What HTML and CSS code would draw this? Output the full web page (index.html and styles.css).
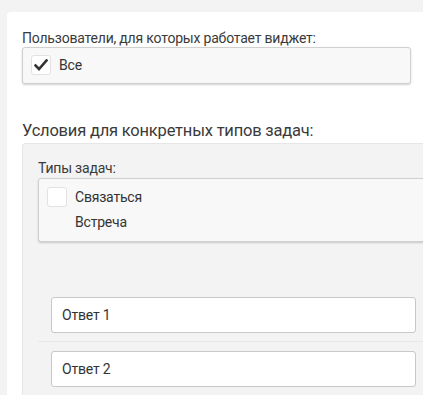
FILE: index.html
```html
<!DOCTYPE html>
<html>
<head>
    <meta charset="utf-8" />
    <title></title>
    <link rel="stylesheet" href="styles.css">
</head>
<body>
    <div class="card">
        <div class="field">
            <div class="label">Пользователи, для которых работает виджет:</div>
            <div class="select">
                <div class="option">
                    <span class="check checked">
                        <svg width="14" height="12" viewBox="0 0 14 12"><path d="M1.5 6.5 L5 10 L12.5 1.5" fill="none" stroke="#333" stroke-width="2.6" stroke-linecap="square"/></svg>
                    </span>
                    <span>Все</span>
                </div>
            </div>
        </div>
        <div class="title">Условия для конкретных типов задач:</div>
        <div class="panel">
            <div class="label">Типы задач:</div>
            <div class="select">
                <div class="option">
                    <span class="check"></span>
                    <span>Связаться</span>
                </div>
                <div class="option">
                    <span class="check none"></span>
                    <span>Встреча</span>
                </div>
            </div>
            <div class="answers">
                <div class="answer"><div class="input">Ответ 1</div></div>
                <div class="answer"><div class="input">Ответ 2</div></div>
            </div>
        </div>
    </div>
</body>
</html>
```

FILE: styles.css
```css
*{
    padding:0;
    margin:0;
    box-sizing:border-box;
}
body{
    background:#f3f3f3;
    font-family:Roboto, "Noto Sans", sans-serif;
    color:#333;
    font-size:14px;
    letter-spacing:-0.2px;
    overflow:hidden;
}
.card{
    background:#fff;
    margin:12px 0 0 7px;
    width:430px;
    height:400px;
    border-radius:4px 0 0 0;
    padding:17px 0 0 15px;
}
.label{
    font-size:14px;
    line-height:18px;
    color:#3a3a3a;
}
.select{
    background:#f8f8f8;
    border:1px solid #d0d0d0;
    border-radius:3px;
    box-shadow:0 1px 2px rgba(0,0,0,0.18);
    padding:7px 8px;
    width:389px;
}
.field .select{
    height:37px;
}
.option{
    display:flex;
    align-items:center;
    height:20px;
    margin-bottom:5px;
}
.option:last-child{
    margin-bottom:0;
}
.check{
    width:20px;
    height:20px;
    background:#fff;
    border:1px solid #e2e2e2;
    border-radius:3px;
    margin-right:8px;
    display:flex;
    align-items:center;
    justify-content:center;
}
.check.none{
    visibility:hidden;
}
.title{
    font-size:16.5px;
    line-height:22px;
    margin-top:36px;
    color:#3a3a3a;
}
.panel{
    background:#f3f3f3;
    border:1px solid #e6e6e6;
    border-right:0;
    border-radius:4px 0 0 0;
    margin-top:1px;
    padding:15px 0 0 15px;
    height:260px;
}
.panel .select{
    margin-top:1px;
    height:64px;
    padding-top:8px;
}
.answers{
    margin-top:46px;
}
.answer{
    padding:9px 0 8px 13px;
    border-bottom:1px solid #e8e8e8;
}
.answer:last-child{
    border-bottom:0;
}
.input{
    background:#fff;
    border:1px solid #c8c8c8;
    border-radius:3px;
    height:36px;
    width:365px;
    padding:0 10px;
    display:flex;
    align-items:center;
    font-size:14px;
}
```
